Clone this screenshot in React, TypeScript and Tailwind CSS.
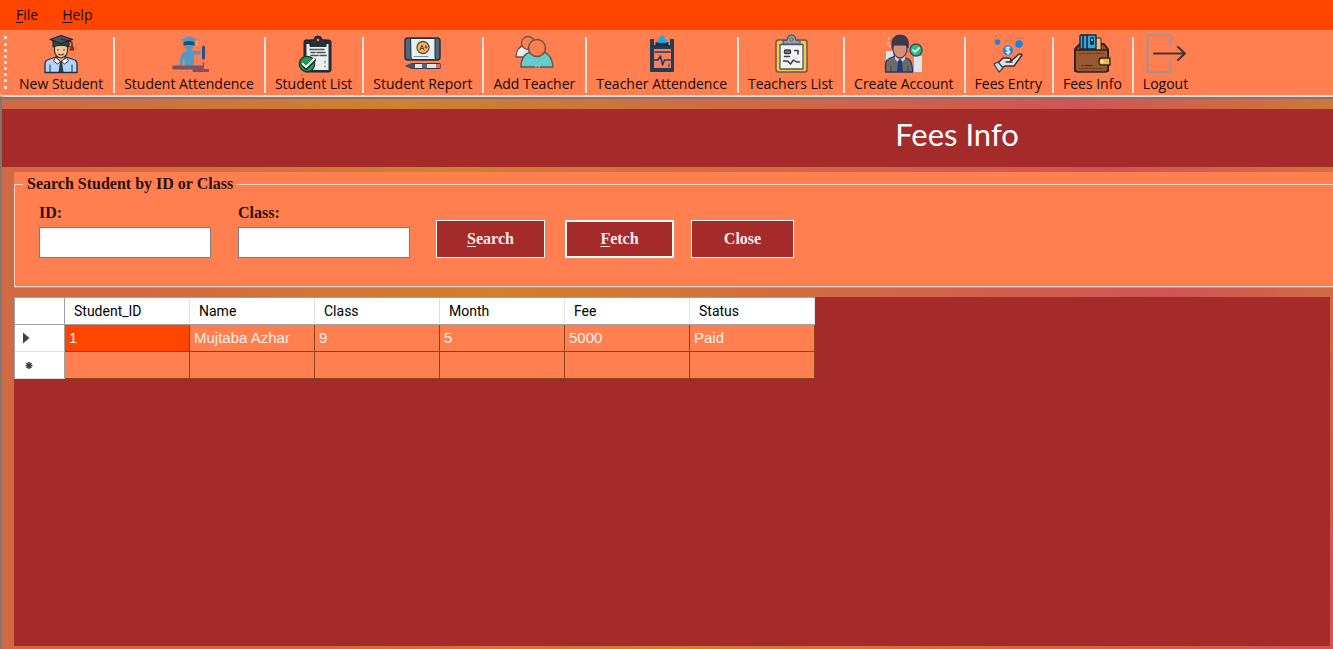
import { Fragment, type ReactNode } from "react";

const Svg = ({ children }: { children: ReactNode }) => (
  <svg aria-hidden="true" viewBox="0 0 40 40" className="size-10" fill="none" strokeLinecap="round" strokeLinejoin="round">
    {children}
  </svg>
);

const NewStudentIcon = () => (
  <Svg>
    <path d="M4 38.5V30q0-3.5 3.500-4.500L15 23l5 4 5-4 7.500 2.500q3.500 1 3.500 4.500v8.500z" fill="#b5d5f8" stroke="#1d2e48" strokeWidth="1.300" />
    <path d="M16 20v4l4 4 4-4v-4z" fill="#eeb27c" stroke="#3c2f33" />
    <path d="M14.500 23.500 12.500 27l4 3 3.500-3 3.500 3 4-3-2-3.500-5.500 4z" fill="#fff" stroke="#1d2e48" />
    <path d="m19 28-1.500 10h5L21 28z" fill="#2f3948" />
    <path d="M9 31v7M31 31v7" stroke="#1d2e48" />
    <path d="M13.500 10.500v6q0 6 6.500 7.500 6.500-1.500 6.500-7.500v-6z" fill="#fac992" stroke="#3c2f33" strokeWidth="1.200" />
    <path d="M17 15.500v.8M23 15.500v.8M17.500 20q2.500 2 5 0" stroke="#4b3030" strokeWidth="1.100" />
    <path d="M12 7v6q8-3.500 16 0V7z" fill="#35434f" stroke="#192129" />
    <path d="m9 5.500 11-4 11.500 4L20 9.500z" fill="#465561" stroke="#192129" strokeWidth="1.200" />
    <path d="M20 5.500q8 .5 11 3v5" stroke="#192129" strokeWidth="1.100" />
    <path d="M30 12.500h2l.8 3.500h-3.600z" fill="#7d3b24" stroke="#421f18" strokeWidth=".7" />
  </Svg>
);

const AttendanceIcon = () => (
  <Svg>
    <path d="m11 6 9-4 9 4-4 1.500v3q-5-2-10 0v-3z" fill="#4f9ac6" />
    <path d="M14.500 8q5.500-2 11 0v4q-5.500-1.500-11 0z" fill="#244d78" />
    <path d="M16 11h8v3q-1 3-4 3t-4-3z" fill="#4f9ac6" />
    <path d="M28 7v4" stroke="#e0b070" strokeWidth="1.500" />
    <path d="M16.500 17h15v3.500H25V32h-9l-1-9-2 9h-2.500q0-13 6-15z" fill="#4f9ac6" />
    <path d="M34.500 13v11" stroke="#314d82" strokeWidth="3" />
    <path d="M5 33.500h28" stroke="#855062" strokeWidth="4" />
    <path d="M25 36.500h15" stroke="#855062" strokeWidth="3" />
    <path d="M6 33.500h17M34.500 29v3" stroke="#59617e" strokeWidth="1.500" />
  </Svg>
);

const StudentListIcon = () => (
  <Svg>
    <rect x="10" y="6" width="27" height="32" rx="2" fill="#26333d" stroke="#18252e" />
    <path d="M12.500 10h22v26h-22z" fill="#eceeed" />
    <path d="M16 12V6h4q0-4 4-4t4 4h4v6z" fill="#26333d" stroke="#17232c" />
    <circle cx="24" cy="6" r="1.300" fill="#ff7f50" />
    <path d="M16 15.500h15M17 18.500h4m2 0h8M17 21.500h7m2 0h6" stroke="#4c545a" strokeWidth="1.600" strokeDasharray="4 1" />
    <path d="M31 27v2m0 3v1" stroke="#697277" />
    <circle cx="13" cy="30" r="7.700" fill="#259c55" stroke="#113c30" strokeWidth="1.300" />
    <path d="m8.500 30 3.500 4 8-8" stroke="#17382e" strokeWidth="4" />
    <path d="m8.500 29.500 3.500 3.500 8-8" stroke="#fff" strokeWidth="2" />
  </Svg>
);

const ReportIcon = () => (
  <Svg>
    <rect x="2" y="4" width="35" height="22" rx="3" fill="#56667a" stroke="#26303c" strokeWidth="1.500" />
    <path d="M8 4.500h24v19q0 2 2 2H10q-2 0-2-2z" fill="#e3f2f4" stroke="#26303c" />
    <circle cx="20" cy="13.500" r="6" fill="#f8b45c" stroke="#6b4c37" strokeWidth="1.300" />
    <path d="m17 16 2-5 2 5m-3.200-1.500h2.500M22 13h2m-1-1v2" stroke="#4a3c35" strokeWidth=".9" />
    <path d="M11 22.500h14" stroke="#65737a" strokeWidth=".8" />
    <path d="m3 32 6-2.500h27q1.500 0 1.500 2.500T36 34.500H9z" fill="#d8e6e8" stroke="#303845" strokeWidth="1.200" />
    <path d="m3 32 6-2.500h3v5H9z" fill="#4a5261" />
    <path d="M19 29.500h5v5h-5z" fill="#566577" />
    <path d="M33 30h3q1.500 0 1.500 2T36 34h-3z" fill="#e56472" />
  </Svg>
);

const AddTeacherIcon = () => (
  <Svg>
    <path d="M2 23q0-10 9-12h5l4 12z" fill="#e9eceb" stroke="#665351" strokeWidth="1.300" />
    <circle cx="14" cy="9" r="6.500" fill="#ff7f50" stroke="#665351" strokeWidth="1.300" />
    <path d="M7 33q0-13 10-15h13q8 3 9 15z" fill="#66ccca" stroke="#545e5d" strokeWidth="1.400" />
    <circle cx="23" cy="14" r="8.500" fill="#ff7f50" stroke="#665351" strokeWidth="1.500" />
    <path d="M22 32v1m3-1v1" stroke="#b0eeeb" />
  </Svg>
);

const TeacherAttendanceIcon = () => (
  <Svg>
    <path d="M9 6h22v31H9z" fill="#233b55" stroke="#233b55" strokeWidth="2" />
    <path d="M12 5h16v6H12z" fill="#ff7f50" />
    <path d="M13.500 8h13v4h-13z" fill="#17304c" />
    <path d="M12 15h17v19H12z" fill="#f67f5d" />
    <path d="M15.500 8V6q2.500 0 2.500-2.500Q18 1.500 20 1.500t2 2Q22 6 24.500 6v2z" fill="#22a9dd" stroke="#22a9dd" />
    <path d="M13 18h15" stroke="#233b55" strokeWidth="1.500" />
    <path d="M12 26h4l2.500-4 2 9 2-5h6" stroke="#233b55" strokeWidth="1.500" />
    <path d="M27 30v3" stroke="#233b55" />
  </Svg>
);

const TeachersListIcon = () => (
  <Svg>
    <rect x="5" y="6" width="31" height="32" rx="2.500" fill="#f4c83f" stroke="#66595a" strokeWidth="1.500" />
    <path d="M9 10.500h23V35H9z" fill="#f2f2f2" stroke="#585259" strokeWidth="1.300" />
    <path d="M12 10V6.500h4q.5-5.500 4.500-5.500T25 6.500h4V10z" fill="#92a6b4" stroke="#4f5f6d" strokeWidth="1.300" />
    <circle cx="20.500" cy="5.500" r="1.800" fill="#ff7f50" stroke="#4f5f6d" />
    <rect x="13.500" y="16" width="6" height="3.500" rx="1" fill="#79828d" stroke="#383d46" strokeWidth="1.400" />
    <path d="M23.500 16.500H27V20M13.500 22.500h5M12.500 27h4l3 3 3-4 3 2h3" stroke="#383d46" strokeWidth="1.500" />
  </Svg>
);

const AccountIcon = () => (
  <Svg>
    <path d="M2 17h7v9H2zM30 22h8v16h-8z" fill="#d9e4ef" />
    <path d="M4 9v1M5 4v1M6 12v1" stroke="#e8c9c0" strokeWidth="1.500" />
    <path d="M1.500 38v-7q0-5 5-7l7-3 8 3 3 1q4 3 4 13z" fill="#6b6d6c" stroke="#28375d" strokeWidth="1.300" />
    <path d="M11 21v4l5 5 5-5v-5z" fill="#d9ddea" />
    <path d="M12 18v5l4 4 4-4v-5z" fill="#bd745f" />
    <path d="M9 10v6q1 7 7 8 6-1 7-8v-6z" fill="#d78f78" stroke="#3c365b" strokeWidth="1.200" />
    <path d="M8 14V7q2-6 8-6 10 0 8 13l-2-3H10z" fill="#40394c" stroke="#28375d" />
    <path d="m14 27-1 11h6l-1-11-2-2z" fill="#203b75" />
    <path d="M7 32v5m17-5v5" stroke="#364168" />
    <circle cx="32" cy="16" r="6" fill="#35ba83" stroke="#27506d" strokeWidth="1.400" />
    <path d="m29 16 2 2 4-4" stroke="#e8fff6" strokeWidth="1.700" />
  </Svg>
);

const FeesEntryIcon = () => (
  <Svg>
    <circle cx="9.500" cy="8" r="2.800" fill="#1683e6" />
    <circle cx="31" cy="10" r="3.700" fill="#1683e6" />
    <circle cx="20" cy="16.500" r="5" fill="#1683e6" />
    <path d="M22 14q-4-1.500-4 .8c0 1.800 4 1 4 3s-4 1.200-4 .2m2-5.500v8" stroke="#fff" strokeWidth="1.100" />
    <path d="M7 2.500h2m3-.5h1M17 7h6m-5-2v3m4-3v3M28 4h7" stroke="#b98467" strokeWidth="1.300" />
    <path d="m10 29 5-5h5q3 0 3 2l-1 2 8-7q3-2 4 0l-8 11H17l-3 2z" fill="#e6e2df" stroke="#302f39" strokeWidth="1.400" />
    <path d="M18 28h6" stroke="#302f39" strokeWidth="1.400" />
    <path d="m6 30 4-2 5 6-4 4z" fill="#c9e1ed" stroke="#37424a" strokeWidth="1.200" />
  </Svg>
);

const WalletIcon = () => (
  <Svg>
    <path d="m3 15 5-5h24l4 5v22H3z" fill="#91522c" stroke="#2f211d" strokeWidth="1.800" />
    <path d="M23 4h6v13h-6z" fill="#f5c16a" stroke="#332722" />
    <path d="M8 2q0-1 1-1h15v14H8z" fill="#2fa9e5" stroke="#182935" strokeWidth="1.400" />
    <path d="M11 1v14M15 1v14" stroke="#182935" strokeWidth="1.500" />
    <rect x="18" y="3" width="4" height="8" rx="1.500" fill="#25303a" />
    <path d="M20 5.500v1" stroke="#8ce1ff" strokeWidth="1.500" />
    <path d="M3 16h33v19q0 3-3 3H6q-3 0-3-3z" fill="#995830" stroke="#2f211d" strokeWidth="1.700" />
    <path d="M7 19.500h25M7 34.500h25" stroke="#67412d" strokeDasharray="2 1.500" />
    <path d="M10 31.500h1m2 0h7" stroke="#40291f" strokeWidth="1.200" />
    <path d="M29 24h9v7h-9q-2 0-2-3.500t2-3.500z" fill="#efb653" stroke="#39271d" strokeWidth="1.400" />
    <circle cx="30" cy="27.500" r="1.500" fill="#ffe49a" />
  </Svg>
);

const LogoutIcon = () => (
  <Svg>
    <path d="M24.500 12V1H1.500v37h23V27" stroke="#ad8e93" strokeWidth="2.200" strokeLinecap="square" strokeLinejoin="miter" />
    <path d="M8 19.500h30M32 13l7 6.500-7 6.500" stroke="#45313a" strokeWidth="2" />
  </Svg>
);

const tools = [
  { label: "New Student", Icon: NewStudentIcon },
  { label: "Student Attendence", Icon: AttendanceIcon },
  { label: "Student List", Icon: StudentListIcon },
  { label: "Student Report", Icon: ReportIcon },
  { label: "Add Teacher", Icon: AddTeacherIcon },
  { label: "Teacher Attendence", Icon: TeacherAttendanceIcon },
  { label: "Teachers List", Icon: TeachersListIcon },
  { label: "Create Account", Icon: AccountIcon },
  { label: "Fees Entry", Icon: FeesEntryIcon },
  { label: "Fees Info", Icon: WalletIcon },
  { label: "Logout", Icon: LogoutIcon },
];

const columns = ["Student_ID", "Name", "Class", "Month", "Fee", "Status"];
const rows = [
  ["1", "Mujtaba Azhar", "9", "5", "5000", "Paid"],
  ["", "", "", "", "", ""],
];

const field = "h-[31px] w-[172px] border border-[#7a7a7a] bg-white px-1 text-black outline-none";
const action = "h-[38px] border-white bg-[#a52a2a] text-[#fbeaea]";

export default function App() {
  return (
    <div className="flex min-h-screen flex-col overflow-x-hidden bg-[#ff7f50]">
      <nav className="flex h-[30px] shrink-0 items-center gap-6 bg-[#ff4500] px-4 font-['Open_Sans',sans-serif] text-sm text-[#1f0a02]">
        <button type="button"><span className="underline underline-offset-2">F</span>ile</button>
        <button type="button"><span className="underline underline-offset-2">H</span>elp</button>
      </nav>

      <div role="toolbar" aria-label="Main" className="flex h-[67px] shrink-0 rounded-bl border-b-2 border-[#e6d5cd] bg-[#ff7f50] pl-1">
        <div className="my-1.5 mr-[3px] w-0 border-l-3 border-dotted border-[#f7dcd1]" />
        {tools.map(({ label, Icon }, i) => (
          <Fragment key={label}>
            {i > 0 && <div className="mt-[7px] ml-px h-[56px] w-0.5 shrink-0 bg-[#f3e3dc]" />}
            <button type="button" className="flex shrink-0 flex-col items-center px-[9px] pt-1 font-['Open_Sans',sans-serif] text-sm leading-5 whitespace-nowrap text-[#1a0a05]">
              <Icon />
              {label}
            </button>
          </Fragment>
        ))}
      </div>

      <main className="flex grow flex-col border-t-2 border-l-2 border-[#7d7673] bg-[linear-gradient(63deg,#d06a44_0%,#d06a44_20%,#cf8030_42%,#d06a44_63%,#d05454_84%,#d07838_100%)] pt-2.5 font-['Liberation_Serif',serif]">
        <h1 className="flex h-[58px] items-center justify-center bg-[#a52a2a] pb-2 pl-[579px] font-['Lato',sans-serif] text-[31px] font-normal text-white">
          Fees Info
        </h1>

        <div className="mt-[5px] ml-3 h-[116px] bg-[#ff7f50] text-base font-bold">
          <fieldset className="h-[115px] border border-r-0 border-[#f5d6ca] pl-2">
            <legend className="px-1 leading-6 text-[#2a1109]">Search Student by ID or Class</legend>
            <form className="flex items-end pt-[7px] pl-4 leading-5" onSubmit={(e) => e.preventDefault()}>
              <label className="mr-[27px] flex flex-col gap-1 text-[#2a1109]">
                ID:
                <input type="text" className={field} />
              </label>
              <label className="mr-[26px] flex flex-col gap-1 text-[#2a1109]">
                Class:
                <input type="text" className={field} />
              </label>
              <button type="submit" className={`${action} mr-5 w-[109px] border`}><span className="underline underline-offset-2">S</span>earch</button>
              <button type="button" className={`${action} mr-[17px] w-[109px] border-2`}><span className="underline underline-offset-2">F</span>etch</button>
              <button type="button" className={`${action} w-[103px] border`}>Close</button>
            </form>
          </fieldset>
        </div>

        <div className="mt-[9px] mr-[3px] mb-[3px] ml-3 grow bg-[#a52a2a] font-['Liberation_Sans',sans-serif]">
          <table className="w-[801px] table-fixed border-separate border-spacing-0 border-t border-l border-[#a0a0a0] text-left">
            <thead className="bg-white text-sm text-black">
              <tr className="h-[27px]">
                <th aria-label="Row" className="w-[50px] border-r border-b border-[#a0a0a0]" />
                {columns.map((c) => (
                  <th key={c} scope="col" className="border-r border-b border-r-[#e2e2e2] border-b-[#a0a0a0] px-[9px] py-0 font-['Roboto','Liberation_Sans',sans-serif] font-normal">{c}</th>
                ))}
              </tr>
            </thead>
            <tbody className="text-[15px] text-[#fff0ea]">
              {rows.map((row, r) => (
                <tr key={r} className="h-[27px]">
                  <th scope="row" aria-label={r === 0 ? "Current row" : "New row"} className="border-r border-b border-r-[#a0a0a0] border-b-[#dcdcdc] bg-white p-0">
                    <svg viewBox="0 0 12 12" className="ml-1.5 size-3" fill="#3f3f3f" stroke="#3f3f3f">
                      {r === 0 ? (
                        <path d="M2 .5v11L8.500 6z" stroke="none" />
                      ) : (
                        <path d="M8 3v7M4.500 6.500h7M5.500 4l5 5M10.500 4l-5 5" strokeWidth="1.500" />
                      )}
                    </svg>
                  </th>
                  {row.map((cell, c) => (
                    <td key={c} className={`border-r border-b border-[#8b4513] px-1 py-0 ${r === 0 && c === 0 ? "bg-[#ff4500]" : "bg-[#ff7f50]"}`}>{cell}</td>
                  ))}
                </tr>
              ))}
            </tbody>
          </table>
        </div>
      </main>
    </div>
  );
}
